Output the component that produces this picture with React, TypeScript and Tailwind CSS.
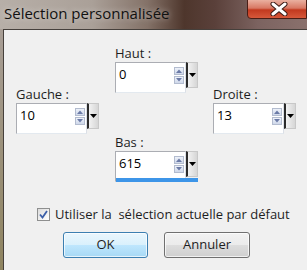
import React from 'react';

const SpinField = ({ label, value, bar = false }: { label: string; value: string; bar?: boolean }) => {
  return (
    <div className="flex flex-col">
      <div className="text-[13px] leading-4 mb-px text-[#1e1e1e]">{label}</div>
      <div className="relative flex h-[31px] w-[83px]">
        {/* champ blanc */}
        <div className="flex w-[71px] h-[31px] bg-white border border-[#abadb3] border-b-[#e3e9ef] border-r-[#dbdfe6]">
          <span className="pl-[3px] pt-[3px] text-[13px] leading-4 flex-1 text-black">{value}</span>
          <div className="flex flex-col gap-[1px] pt-[4px] pr-[1px]">
            <div className="w-[10px] h-[8px] flex items-center justify-center bg-[linear-gradient(#eef2fa,#cfd8ea)] border border-[#b3bccf]">
              <svg width="6" height="4" viewBox="0 0 6 4"><path d="M0 4 L3 0.5 L6 4 Z" fill="#6b7aa6" /></svg>
            </div>
            <div className="w-[10px] h-[8px] flex items-center justify-center bg-[linear-gradient(#eef2fa,#cfd8ea)] border border-[#b3bccf]">
              <svg width="6" height="4" viewBox="0 0 6 4"><path d="M0 0 L3 3.5 L6 0 Z" fill="#6b7aa6" /></svg>
            </div>
          </div>
        </div>
        {/* bouton menu */}
        <div className="flex items-center justify-center w-[12px] h-[26px] bg-[linear-gradient(90deg,#f2f2f2,#d6d6d6)] border border-[#c8c8c8] border-l-[#2b2b2b] border-l-2">
          <svg width="7" height="4" viewBox="0 0 7 4"><path d="M0 0 L7 0 L3.5 4 Z" fill="#000" /></svg>
        </div>
        {bar && <div className="absolute left-px right-0 bottom-0 h-[4px] bg-[#3d95e8]" />}
      </div>
    </div>
  );
};

const App = () => {
  return (
    <div className="w-[307px] h-[270px] overflow-hidden flex flex-col font-['Open_Sans',sans-serif] bg-[#a79d95]">
      {/* barre de titre */}
      <div className="flex h-[29px] flex-none bg-[linear-gradient(90deg,#b7afa8_0%,#aaa098_30%,#847268_48%,#4e362c_60%,#5a403a_70%,#7c6360_84%,#8a716d_100%)]">
        <div className="flex-1 pl-[4px] pt-[4px] text-[15px] leading-[19px] text-[#111] [text-shadow:0_0_6px_rgba(255,255,255,0.6)]">
          Sélection personnalisée
        </div>
        <div className="flex-none self-start w-[60px] h-[20px] -mt-px flex items-center pl-[22px] rounded-bl-[4px] border border-[#4a1e16] bg-[linear-gradient(#eab0a0_0%,#d87864_45%,#c2391f_55%,#d6583a_100%)]">
          <svg width="18" height="14" viewBox="0 0 18 14">
            <path d="M3 2 L15 12 M15 2 L3 12" stroke="#3a1a14" strokeWidth="5" strokeLinecap="round" />
            <path d="M3 2 L15 12 M15 2 L3 12" stroke="#ffffff" strokeWidth="3" strokeLinecap="round" />
          </svg>
        </div>
      </div>

      {/* corps */}
      <div className="flex flex-1">
        <div className="w-[3px] flex-none bg-[linear-gradient(#a89e96,#8f8460_100%)]" />
        <div className="flex-1 flex flex-col bg-[#f0f0f0] border-t border-l border-[#46403c]">
          <div className="flex pl-[12px] pt-[15px]">
            <div className="mt-[41px]">
              <SpinField label="Gauche :" value="10" />
            </div>
            <div className="ml-[16px] flex flex-col gap-[41px]">
              <SpinField label="Haut :" value="0" />
              <SpinField label="Bas :" value="615" bar />
            </div>
            <div className="ml-[15px] mt-[41px]">
              <SpinField label="Droite :" value="13" />
            </div>
          </div>

          <div className="flex items-center ml-[33px] mt-[24px] gap-[5px]">
            <div className="w-[13px] h-[13px] flex items-center justify-center border border-[#8e8f8f] bg-[linear-gradient(135deg,#dcdcdc,#ffffff)]">
              <svg width="9" height="9" viewBox="0 0 9 9">
                <path d="M1 4.5 L3.5 7.5 L8 1" stroke="#3b5ea8" strokeWidth="1.8" fill="none" />
              </svg>
            </div>
            <span className="text-[13px] leading-4 text-[#1e1e1e] whitespace-pre">Utiliser la  sélection actuelle par défaut</span>
          </div>

          <div className="flex ml-[59px] mt-[10px] gap-[16px]">
            <button className="w-[85px] h-[26px] rounded-[3px] border border-[#3c7fb1] bg-[linear-gradient(#eaf6fd_0%,#d9f0fc_50%,#bee6fd_51%,#a7d9f5_100%)] text-[13px] text-[#1e1e1e] shadow-[inset_0_0_0_1px_rgba(255,255,255,0.7)]">
              OK
            </button>
            <button className="w-[86px] h-[26px] rounded-[3px] border border-[#707070] bg-[linear-gradient(#f2f2f2_0%,#ebebeb_50%,#dddddd_51%,#cfcfcf_100%)] text-[13px] text-[#1e1e1e] shadow-[inset_0_0_0_1px_rgba(255,255,255,0.7)]">
              Annuler
            </button>
          </div>
        </div>
      </div>
    </div>
  );
};

export default App;
